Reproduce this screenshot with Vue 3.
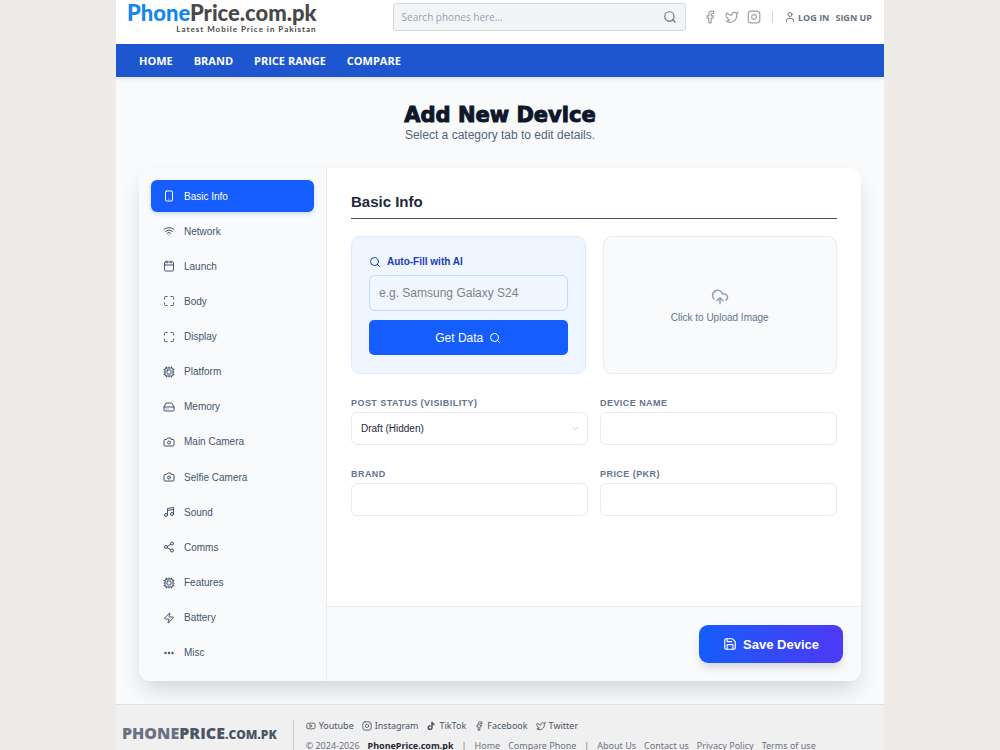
<template>
  <div class="site">
    <header class="topbar">
      <a class="logo" href="#">
        <span class="logo-name"><span class="logo-blue">Phone</span>Price.com.pk</span>
        <span class="logo-tagline">Latest Mobile Price in Pakistan</span>
      </a>
      <form class="search" @submit.prevent>
        <input v-model="search" type="text" placeholder="Search phones here..." aria-label="Search phones">
        <button type="submit" aria-label="Search"><svg class="icon" viewBox="0 0 24 24" v-html="icons.search"></svg></button>
      </form>
      <div class="account">
        <a v-for="s in ['facebook', 'twitter', 'instagram']" :key="s" class="social" href="#" :aria-label="s">
          <svg class="icon" viewBox="0 0 24 24" v-html="icons[s]"></svg>
        </a>
        <span class="account-divider"></span>
        <a class="login" href="#"><svg class="icon" viewBox="0 0 24 24" v-html="icons.user"></svg>LOG IN</a>
        <a class="signup" href="#">SIGN UP</a>
      </div>
    </header>

    <nav class="navbar">
      <a v-for="item in navItems" :key="item" href="#">{{ item }}</a>
    </nav>

    <main class="page">
      <div class="page-title">
        <h1>Add New Device</h1>
        <p>Select a category tab to edit details.</p>
      </div>

      <div class="card">
        <div class="tabs">
          <button v-for="tab in tabs" :key="tab.label" type="button" :class="{ active: tab.label === activeTab }" @click="activeTab = tab.label">
            <svg class="icon" viewBox="0 0 24 24" v-html="icons[tab.icon]"></svg>{{ tab.label }}
          </button>
        </div>

        <form class="editor" @submit.prevent>
          <div class="editor-body">
            <h2>{{ activeTab }}</h2>
            <div class="panels">
              <div class="autofill">
                <label for="autofill"><svg class="icon" viewBox="0 0 24 24" v-html="icons.search"></svg>Auto-Fill with AI</label>
                <input id="autofill" v-model="autofill" type="text" placeholder="e.g. Samsung Galaxy S24">
                <button type="button">Get Data<svg class="icon" viewBox="0 0 24 24" v-html="icons.search"></svg></button>
              </div>
              <button type="button" class="upload">
                <svg class="icon" viewBox="0 0 24 24" v-html="icons.upload"></svg>
                <span>Click to Upload Image</span>
              </button>
            </div>
            <div class="fields">
              <div class="field">
                <label for="status">POST STATUS (VISIBILITY)</label>
                <div class="select-box">
                  <select id="status" v-model="device.status">
                    <option value="draft">Draft (Hidden)</option>
                    <option value="published">Published</option>
                  </select>
                  <svg class="icon" viewBox="0 0 24 24" v-html="icons.chevron"></svg>
                </div>
              </div>
              <div v-for="f in fields" :key="f.key" class="field">
                <label :for="f.key">{{ f.label }}</label>
                <input :id="f.key" v-model="device[f.key]" type="text">
              </div>
            </div>
          </div>
          <div class="editor-footer">
            <button type="submit" class="save"><svg class="icon" viewBox="0 0 24 24" v-html="icons.save"></svg>Save Device</button>
          </div>
        </form>
      </div>
    </main>

    <footer class="footer">
      <a class="footer-logo" href="#"><span class="grey">PHONE</span>PRICE<small>.COM.PK</small></a>
      <div class="footer-info">
        <div class="footer-social">
          <a v-for="s in socials" :key="s.label" href="#"><svg class="icon" viewBox="0 0 24 24" v-html="icons[s.icon]"></svg>{{ s.label }}</a>
        </div>
        <div class="footer-links">
          <span>© 2024-2026</span>
          <strong>PhonePrice.com.pk</strong>
          <span class="bar">|</span>
          <a href="#">Home</a>
          <a href="#">Compare Phone</a>
          <span class="bar">|</span>
          <a href="#">About Us</a>
          <a href="#">Contact us</a>
          <a href="#">Privacy Policy</a>
          <a href="#">Terms of use</a>
        </div>
      </div>
    </footer>
  </div>
</template>

<script setup>
import { reactive, ref } from 'vue';

const search = ref("");
const autofill = ref("");
const activeTab = ref("Basic Info");
const device = reactive({ status: "draft", name: "", brand: "", price: "" });

const navItems = ["HOME", "BRAND", "PRICE RANGE", "COMPARE"];

const tabs = [
  { label: "Basic Info", icon: "phone" },
  { label: "Network", icon: "wifi" },
  { label: "Launch", icon: "calendar" },
  { label: "Body", icon: "maximize" },
  { label: "Display", icon: "maximize" },
  { label: "Platform", icon: "cpu" },
  { label: "Memory", icon: "drive" },
  { label: "Main Camera", icon: "camera" },
  { label: "Selfie Camera", icon: "camera" },
  { label: "Sound", icon: "music" },
  { label: "Comms", icon: "share" },
  { label: "Features", icon: "cpu" },
  { label: "Battery", icon: "zap" },
  { label: "Misc", icon: "more" },
];

const fields = [
  { key: "name", label: "DEVICE NAME" },
  { key: "brand", label: "BRAND" },
  { key: "price", label: "PRICE (PKR)" },
];

const socials = [
  { label: "Youtube", icon: "youtube" },
  { label: "Instagram", icon: "instagram" },
  { label: "TikTok", icon: "tiktok" },
  { label: "Facebook", icon: "facebook" },
  { label: "Twitter", icon: "twitter" },
];

const icons = {
  search: '<circle cx="11" cy="11" r="8"/><path d="m21 21-4.3-4.3"/>',
  facebook: '<path d="M18 2h-3a5 5 0 0 0-5 5v3H7v4h3v8h4v-8h3l1-4h-4V7a1 1 0 0 1 1-1h3z"/>',
  twitter: '<path d="M22 4s-.7 2.1-2 3.4c1.6 10-9.4 17.3-18 11.6 2.2.1 4.4-.6 6-2C3 15.5.5 9.6 3 5c2.2 2.6 5.6 4.1 9 4-.9-4.2 4-6.6 7-3.8 1.1 0 3-1.2 3-1.2z"/>',
  instagram: '<rect x="2" y="2" width="20" height="20" rx="5"/><path d="M16 11.37A4 4 0 1 1 12.63 8 4 4 0 0 1 16 11.37z"/><path d="M17.5 6.5h.01"/>',
  youtube: '<path d="M2.5 17a24 24 0 0 1 0-10 2 2 0 0 1 1.4-1.4 50 50 0 0 1 16.2 0A2 2 0 0 1 21.5 7a24 24 0 0 1 0 10 2 2 0 0 1-1.4 1.4 50 50 0 0 1-16.2 0A2 2 0 0 1 2.5 17"/><path d="m10 15 5-3-5-3z"/>',
  tiktok: '<path fill="currentColor" stroke="none" d="M12.5 2h3.7c.3 2.7 1.8 4.3 4.3 4.5v3.8a9 9 0 0 1-4.3-1.3v6.6c0 8.4-12.7 8.5-12.7.3 0-4.4 3.7-6.9 7.7-6.3v4c-1.9-.6-3.7.3-3.7 2.2 0 3.4 5 3.3 5-.5z"/>',
  user: '<circle cx="12" cy="7" r="4"/><path d="M19 21v-2a4 4 0 0 0-4-4H9a4 4 0 0 0-4 4v2"/>',
  phone: '<rect x="5" y="2" width="14" height="20" rx="2"/><path d="M12 18h.01"/>',
  wifi: '<path d="M2 8.82a15 15 0 0 1 20 0"/><path d="M5 12.86a10 10 0 0 1 14 0"/><path d="M8.5 16.43a5 5 0 0 1 7 0"/><path d="M12 20h.01"/>',
  calendar: '<path d="M8 2v4M16 2v4M3 10h18"/><rect x="3" y="4" width="18" height="18" rx="2"/>',
  maximize: '<path d="M8 3H5a2 2 0 0 0-2 2v3M21 8V5a2 2 0 0 0-2-2h-3M3 16v3a2 2 0 0 0 2 2h3M16 21h3a2 2 0 0 0 2-2v-3"/>',
  cpu: '<rect x="4" y="4" width="16" height="16" rx="2"/><rect x="8" y="8" width="8" height="8" rx="1"/><path d="M12 20v2M12 2v2M17 20v2M17 2v2M2 12h2M2 17h2M2 7h2M20 12h2M20 17h2M20 7h2M7 20v2M7 2v2"/>',
  drive: '<path d="M22 12H2M5.45 5.11 2 12v6a2 2 0 0 0 2 2h16a2 2 0 0 0 2-2v-6l-3.45-6.89A2 2 0 0 0 16.76 4H7.24a2 2 0 0 0-1.79 1.11zM6 16h.01M10 16h.01"/>',
  camera: '<path d="M14.5 4h-5L7 7H4a2 2 0 0 0-2 2v9a2 2 0 0 0 2 2h16a2 2 0 0 0 2-2V9a2 2 0 0 0-2-2h-3z"/><circle cx="12" cy="13" r="3"/>',
  music: '<path d="M9 18V5l12-2v13M9 9l12-2"/><circle cx="6" cy="18" r="3"/><circle cx="18" cy="16" r="3"/>',
  share: '<circle cx="18" cy="5" r="3"/><circle cx="6" cy="12" r="3"/><circle cx="18" cy="19" r="3"/><path d="m8.59 13.51 6.83 3.98M15.41 6.51l-6.82 3.98"/>',
  zap: '<path d="M4 14a1 1 0 0 1-.78-1.63l9.9-10.2a.5.5 0 0 1 .86.46l-1.92 6.02A1 1 0 0 0 13 10h7a1 1 0 0 1 .78 1.63l-9.9 10.2a.5.5 0 0 1-.86-.46l1.92-6.02A1 1 0 0 0 11 14z"/>',
  more: '<g stroke-width="3"><circle cx="12" cy="12" r="1"/><circle cx="19" cy="12" r="1"/><circle cx="5" cy="12" r="1"/></g>',
  upload: '<path d="M12 13v8M4 14.9A7 7 0 1 1 15.71 8h1.79a4.5 4.5 0 0 1 2.5 8.24M8 17l4-4 4 4"/>',
  chevron: '<path d="m6 9 6 6 6-6"/>',
  save: '<path d="M15.2 3a2 2 0 0 1 1.4.6l3.8 3.8a2 2 0 0 1 .6 1.4V19a2 2 0 0 1-2 2H5a2 2 0 0 1-2-2V5a2 2 0 0 1 2-2z"/><path d="M17 21v-7a1 1 0 0 0-1-1H8a1 1 0 0 0-1 1v7M7 3v4a1 1 0 0 0 1 1h7"/>',
};
</script>

<style>
body {
  background-color: #efebe8;
}
</style>

<style scoped>
* {
  box-sizing: border-box;
}

.site {
  display: flex;
  flex-direction: column;
  max-width: 768px;
  height: 100vh;
  margin: 0 auto;
  overflow: hidden;
  background-color: #f8fafc;
  font-family: "Noto Sans", "Open Sans", sans-serif;
}

a {
  color: inherit;
  text-decoration: none;
}

button, input, select {
  margin: 0;
  font-family: inherit;
}

button {
  border: 0;
  cursor: pointer;
}

.icon {
  flex: none;
  width: 12px;
  height: 12px;
  fill: none;
  stroke: currentColor;
  stroke-width: 2;
  stroke-linecap: round;
  stroke-linejoin: round;
}

.topbar {
  display: flex;
  flex: none;
  align-items: flex-start;
  height: 44px;
  padding: 0 12px 0 11px;
  background-color: #fff;
}

.logo {
  display: flex;
  flex: none;
  flex-direction: column;
  align-items: flex-end;
  color: #484848;
}

.logo-name {
  font-family: Lato, sans-serif;
  font-size: 22px;
  font-weight: 900;
  line-height: 25px;
}

.logo-blue {
  color: #1386f0;
}

.logo-tagline {
  font-family: Lato, sans-serif;
  font-size: 8px;
  font-weight: 700;
  line-height: 8px;
  letter-spacing: 1px;
}

.search {
  display: flex;
  align-items: center;
  width: 293px;
  height: 28px;
  margin: 3px 0 0 76px;
  padding: 0 8px;
  border: 1px solid #d5d9de;
  border-radius: 3px;
  background-color: #f3f4f6;
}

.search input {
  flex: 1;
  min-width: 0;
  padding: 0;
  border: 0;
  outline: 0;
  background: none;
  font-family: "Open Sans", sans-serif;
  font-size: 10px;
}

.search input::placeholder {
  color: #99a1af;
}

.search button {
  display: flex;
  padding: 0;
  background: none;
  color: #6a7282;
}

.search .icon {
  width: 14px;
  height: 14px;
}

.account {
  display: flex;
  flex: none;
  align-items: center;
  height: 34px;
  margin-left: auto;
  color: #6a7282;
  font-family: "Open Sans", sans-serif;
  font-size: 9px;
  font-weight: 700;
}

.social {
  display: flex;
  margin-right: 8px;
  color: #99a1af;
}

.social .icon {
  width: 14px;
  height: 14px;
}

.account-divider {
  width: 1px;
  height: 12px;
  margin: 0 11px 0 3px;
  background-color: #d1d5dc;
}

.login {
  display: flex;
  align-items: center;
  gap: 2px;
  margin-right: 6px;
}

.navbar {
  position: relative;
  display: flex;
  flex: none;
  align-items: center;
  gap: 21px;
  height: 33px;
  padding: 0 23px;
  background-color: #1d56cf;
  box-shadow: 0 2px 4px rgba(0, 0, 0, 0.1);
  color: #fff;
  font-family: "Open Sans", sans-serif;
  font-size: 11px;
  font-weight: 700;
}

.page {
  flex: none;
  padding: 26px 23px 23px;
  font-family: "Liberation Sans", Arial, sans-serif;
}

.page-title {
  margin-bottom: 25px;
  text-align: center;
}

h1 {
  margin: 0;
  color: #0f172b;
  font-family: "Arial Black", "DejaVu Sans", sans-serif;
  font-size: 21px;
  font-weight: 900;
  line-height: 24px;
  -webkit-text-stroke: 1px #0f172b;
}

.page-title p {
  margin: 0;
  color: #53647c;
  font-size: 12px;
  line-height: 16px;
}

.card {
  display: flex;
  min-height: 513px;
  overflow: hidden;
  border-radius: 12px;
  background-color: #fff;
  box-shadow: 0 12px 24px -4px rgba(0, 0, 0, 0.16);
}

.tabs {
  display: flex;
  flex: none;
  flex-direction: column;
  justify-content: space-between;
  width: 188px;
  padding: 12px;
  border-right: 1px solid #e9edf3;
  background-color: #f8fafc;
}

.tabs button {
  display: flex;
  align-items: center;
  gap: 9px;
  height: 32px;
  padding: 0 12px;
  border-radius: 6px;
  background: none;
  color: #45556c;
  font-size: 10px;
}

.tabs button.active {
  background-color: #155dfc;
  box-shadow: 0 2px 4px rgba(21, 93, 252, 0.2);
  color: #fff;
}

.editor {
  display: flex;
  flex: 1;
  flex-direction: column;
  min-width: 0;
}

.editor-body {
  flex: 1;
  padding: 25px 24px 24px;
}

h2 {
  margin: 0 0 17px;
  padding-bottom: 7px;
  border-bottom: 1px solid #45556c;
  color: #1d293d;
  font-size: 15px;
  font-weight: 700;
  line-height: 18px;
}

.panels {
  display: grid;
  grid-template-columns: 1fr 1fr;
  gap: 17px;
  margin-bottom: 24px;
}

.autofill {
  display: flex;
  flex-direction: column;
  height: 138px;
  padding: 18px 17px;
  border: 1px solid #dbeafe;
  border-radius: 9px;
  background-color: #eff6ff;
}

.autofill label {
  display: flex;
  align-items: center;
  gap: 6px;
  margin-bottom: 6px;
  color: #193cb8;
  font-size: 10px;
  font-weight: 700;
  line-height: 14px;
}

.autofill input {
  width: 100%;
  height: 36px;
  margin-bottom: 9px;
  padding: 0 9px;
  border: 1px solid #bedbff;
  border-radius: 6px;
  background: none;
  font-size: 12px;
}

.autofill input::placeholder {
  color: #7c838d;
}

.autofill button {
  display: flex;
  align-items: center;
  justify-content: center;
  gap: 6px;
  height: 35px;
  border-radius: 5px;
  background-color: #155dfc;
  color: #fff;
  font-size: 12px;
}

.upload {
  display: flex;
  flex-direction: column;
  align-items: center;
  justify-content: center;
  gap: 6px;
  padding: 0;
  border: 1px solid #e6ebf4;
  border-radius: 9px;
  background-color: #f8fafc;
  color: #62748e;
  font-size: 10px;
}

.upload .icon {
  width: 18px;
  height: 18px;
  color: #90a1b9;
}

.fields {
  display: grid;
  grid-template-columns: 1fr 1fr;
  gap: 24px 12px;
}

.field label {
  display: block;
  margin-bottom: 4px;
  color: #62748e;
  font-size: 9px;
  font-weight: 700;
  line-height: 10px;
  letter-spacing: 0.05em;
}

.field input, .field select {
  display: block;
  width: 100%;
  height: 33px;
  padding: 0 9px;
  border: 1px solid #e6ebf1;
  border-radius: 6px;
  background-color: #fff;
  color: #1d293d;
  font-size: 10px;
}

.field select {
  appearance: none;
}

.select-box {
  position: relative;
}

.select-box .icon {
  position: absolute;
  top: 12px;
  right: 8px;
  width: 9px;
  height: 9px;
  color: #a8b5c7;
  pointer-events: none;
}

.editor-footer {
  display: flex;
  flex: none;
  align-items: center;
  justify-content: flex-end;
  height: 75px;
  padding: 0 18px;
  border-top: 1px solid #e9edf3;
  background-color: #f8fafc;
}

.save {
  display: flex;
  align-items: center;
  gap: 6px;
  height: 38px;
  padding: 0 24px;
  border-radius: 9px;
  background: linear-gradient(90deg, #155dfc, #4f39f6);
  box-shadow: 0 6px 10px -2px rgba(0, 0, 0, 0.16);
  color: #fff;
  font-size: 13px;
  font-weight: 700;
}

.save .icon {
  width: 14px;
  height: 14px;
}

.footer {
  position: relative;
  display: flex;
  flex: none;
  padding: 15px 6px 12px;
  border-top: 1px solid #dfe3e8;
  background-color: #f0f0f0;
  color: #4a5565;
  font-size: 9px;
}

.footer-logo {
  height: 26px;
  padding-right: 16px;
  font-family: "Open Sans", sans-serif;
  font-size: 16px;
  font-weight: 800;
  line-height: 26px;
  white-space: nowrap;
}

.footer-logo .grey {
  color: #6a7282;
}

.footer-logo small {
  font-size: 12px;
}

.footer-info {
  display: flex;
  flex-direction: column;
  gap: 8px;
  padding-left: 12px;
  border-left: 1px solid #c8ccd2;
}

.footer-social, .footer-links {
  display: flex;
  gap: 8px;
  line-height: 12px;
  white-space: nowrap;
}

.footer-social a {
  display: flex;
  align-items: center;
  gap: 3px;
}

.footer-social .icon {
  width: 10px;
  height: 10px;
}

.footer-links {
  color: #6a7282;
}

.footer-links strong {
  color: #1e2939;
}
</style>
